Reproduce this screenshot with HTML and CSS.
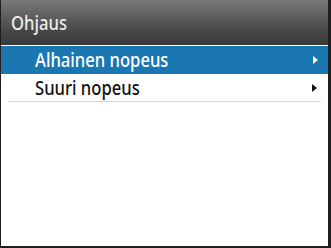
FILE: index.html
```html
<!DOCTYPE html>
<html lang="fi">
<head>
<meta charset="utf-8">
<title>Ohjaus</title>
<link rel="stylesheet" href="styles.css">
</head>
<body>
<div class="screen">
  <div class="header"><span class="label">Ohjaus</span></div>
  <ul class="menu">
    <li class="item selected"><span class="label">Alhainen nopeus</span><span class="arrow"></span></li>
    <li class="item"><span class="label">Suuri nopeus</span><span class="arrow"></span></li>
  </ul>
</div>
</body>
</html>
```

FILE: styles.css
```css
html, body {
  margin: 0;
  padding: 0;
  background: #ffffff;
}
.screen {
  box-sizing: border-box;
  width: 331px;
  height: 248px;
  background: #ffffff;
  border-left: 1px solid #1e1e1e;
  border-right: 3px solid #1e1e1e;
  border-bottom: 2px solid #1e1e1e;
  font-family: "Noto Sans", "Open Sans", sans-serif;
  font-weight: 500;
  overflow: hidden;
}
.label {
  display: inline-block;
  transform: scaleX(0.875);
  transform-origin: left center;
  white-space: nowrap;
}
.header {
  height: 45px;
  box-sizing: border-box;
  padding: 12px 0 0 10px;
  background: linear-gradient(to bottom, #787878 0%, #606060 35%, #464646 70%, #3a3a3a 100%);
  color: #ececec;
  font-size: 19px;
  line-height: 23px;
}
.menu {
  list-style: none;
  margin: 1px 0 0 0;
  padding: 0;
}
.item {
  display: flex;
  align-items: center;
  justify-content: space-between;
  height: 28px;
  box-sizing: border-box;
  padding: 0 10px 0 34px;
  color: #111111;
  font-size: 19px;
}
.item.selected {
  background: #1b77b1;
  color: #ffffff;
}
.item + .item {
  margin-left: 7px;
  margin-right: 7px;
  padding-left: 27px;
  padding-right: 4px;
  border-bottom: 1px solid #ddd3d6;
}
.arrow {
  width: 0;
  height: 0;
  border-top: 4px solid transparent;
  border-bottom: 4px solid transparent;
  border-left: 5px solid #111111;
}
.item.selected .arrow {
  border-left-color: #ffffff;
}
```
